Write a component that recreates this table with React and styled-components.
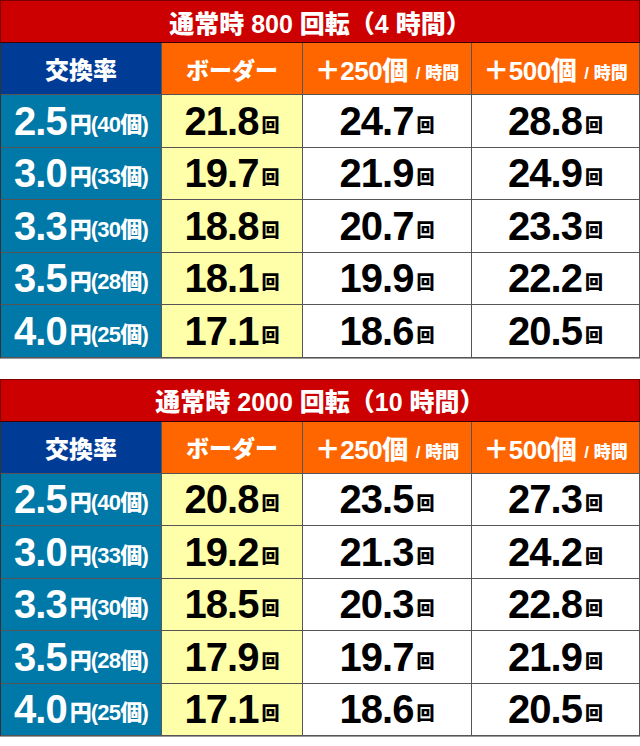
import React from "react";
import styled, { createGlobalStyle } from "styled-components";

const GlobalStyle = createGlobalStyle`
  html, body {
    margin: 0;
    padding: 0;
    background: #ffffff;
  }
  body {
    font-family: "Liberation Sans", "Noto Sans CJK JP", sans-serif;
  }
`;

const mix = `"Liberation Sans", "Noto Sans CJK JP", sans-serif`;

const tables = [
  {
    title: "通常時 800 回転（4 時間）",
    rows: [
      ["2.5", "40", "21.8", "24.7", "28.8"],
      ["3.0", "33", "19.7", "21.9", "24.9"],
      ["3.3", "30", "18.8", "20.7", "23.3"],
      ["3.5", "28", "18.1", "19.9", "22.2"],
      ["4.0", "25", "17.1", "18.6", "20.5"],
    ],
  },
  {
    title: "通常時 2000 回転（10 時間）",
    rows: [
      ["2.5", "40", "20.8", "23.5", "27.3"],
      ["3.0", "33", "19.2", "21.3", "24.2"],
      ["3.3", "30", "18.5", "20.3", "22.8"],
      ["3.5", "28", "17.9", "19.7", "21.9"],
      ["4.0", "25", "17.1", "18.6", "20.5"],
    ],
  },
];

const bg = {
  rate: "#003c96",
  head: "#ff6600",
  yen: "#0078a8",
  border: "#ffffaa",
  plain: "#ffffff",
};

const Page = styled.div`
  width: 640px;
  display: flex;
  flex-direction: column;
  gap: 20px;
`;

const Table = styled.section`
  display: grid;
  grid-template-columns: 162px 141px 169px 168px;
  border-bottom: 1px solid #9a9a9a;
`;

const Title = styled.div`
  grid-column: 1 / -1;
  height: 43px;
  background: #cc0000;
  border: 1px solid #7a0000;
  border-bottom-color: #3a0000;
  box-sizing: border-box;
  color: #fff;
  font-family: ${mix};
  font-weight: 900;
  font-size: 25px;
  display: flex;
  align-items: center;
  justify-content: center;
  white-space: pre;
`;

const Cell = styled.div`
  height: ${(p) => (p.$head ? 52 : 52.5)}px;
  box-sizing: border-box;
  background: ${(p) => bg[p.$kind]};
  border-right: 1px solid #555;
  border-bottom: 1px solid #555;
  &:nth-child(4n + 2) {
    border-left: 1px solid #333;
  }
  display: flex;
  align-items: center;
  justify-content: center;
  color: ${(p) => (p.$kind === "yen" || p.$head ? "#fff" : "#000")};
  font-weight: 700;
  white-space: nowrap;
`;

const HeadText = styled.span`
  font-family: ${mix};
  font-size: ${(p) => p.$size || 23}px;
  font-weight: 900;
  letter-spacing: ${(p) => (p.$tight ? "-0.5px" : "0")};
`;

const Small = styled.span`
  font-family: ${mix};
  font-size: 17px;
  font-weight: 900;
  margin-left: 8px;
  margin-top: 6px;
`;

const Big = styled.span`
  font-family: "Liberation Sans", sans-serif;
  font-size: 40px;
  font-weight: 700;
  letter-spacing: -1px;
  line-height: 1;
`;

const Unit = styled.span`
  font-family: "Noto Sans CJK JP", sans-serif;
  font-weight: 900;
  font-size: 18px;
  align-self: flex-end;
  margin-bottom: 10px;
  margin-left: 3px;
`;

const Sub = styled.span`
  font-family: ${mix};
  font-weight: 900;
  font-size: 22px;
  align-self: flex-end;
  margin-bottom: 9px;
  margin-left: 3px;
  letter-spacing: -0.8px;
`;

const RateTable = ({ title, rows }) => (
  <Table>
    <Title>{title}</Title>
    <Cell $head $kind="rate">
      <HeadText $size={24}>交換率</HeadText>
    </Cell>
    <Cell $head $kind="head">
      <HeadText>ボーダー</HeadText>
    </Cell>
    {["250", "500"].map((n) => (
      <Cell $head $kind="head" key={n}>
        <HeadText $size={26} $tight>
          ＋{n}個
        </HeadText>
        <Small>/ 時間</Small>
      </Cell>
    ))}
    {rows.map((r) => (
      <React.Fragment key={r[0]}>
        <Cell $kind="yen">
          <Big>{r[0]}</Big>
          <Sub>円({r[1]}個)</Sub>
        </Cell>
        <Cell $kind="border">
          <Big>{r[2]}</Big>
          <Unit>回</Unit>
        </Cell>
        <Cell $kind="plain">
          <Big>{r[3]}</Big>
          <Unit>回</Unit>
        </Cell>
        <Cell $kind="plain">
          <Big>{r[4]}</Big>
          <Unit>回</Unit>
        </Cell>
      </React.Fragment>
    ))}
  </Table>
);

export default function App() {
  return (
    <>
      <GlobalStyle />
      <Page>
        {tables.map((t) => (
          <RateTable key={t.title} title={t.title} rows={t.rows} />
        ))}
      </Page>
    </>
  );
}
